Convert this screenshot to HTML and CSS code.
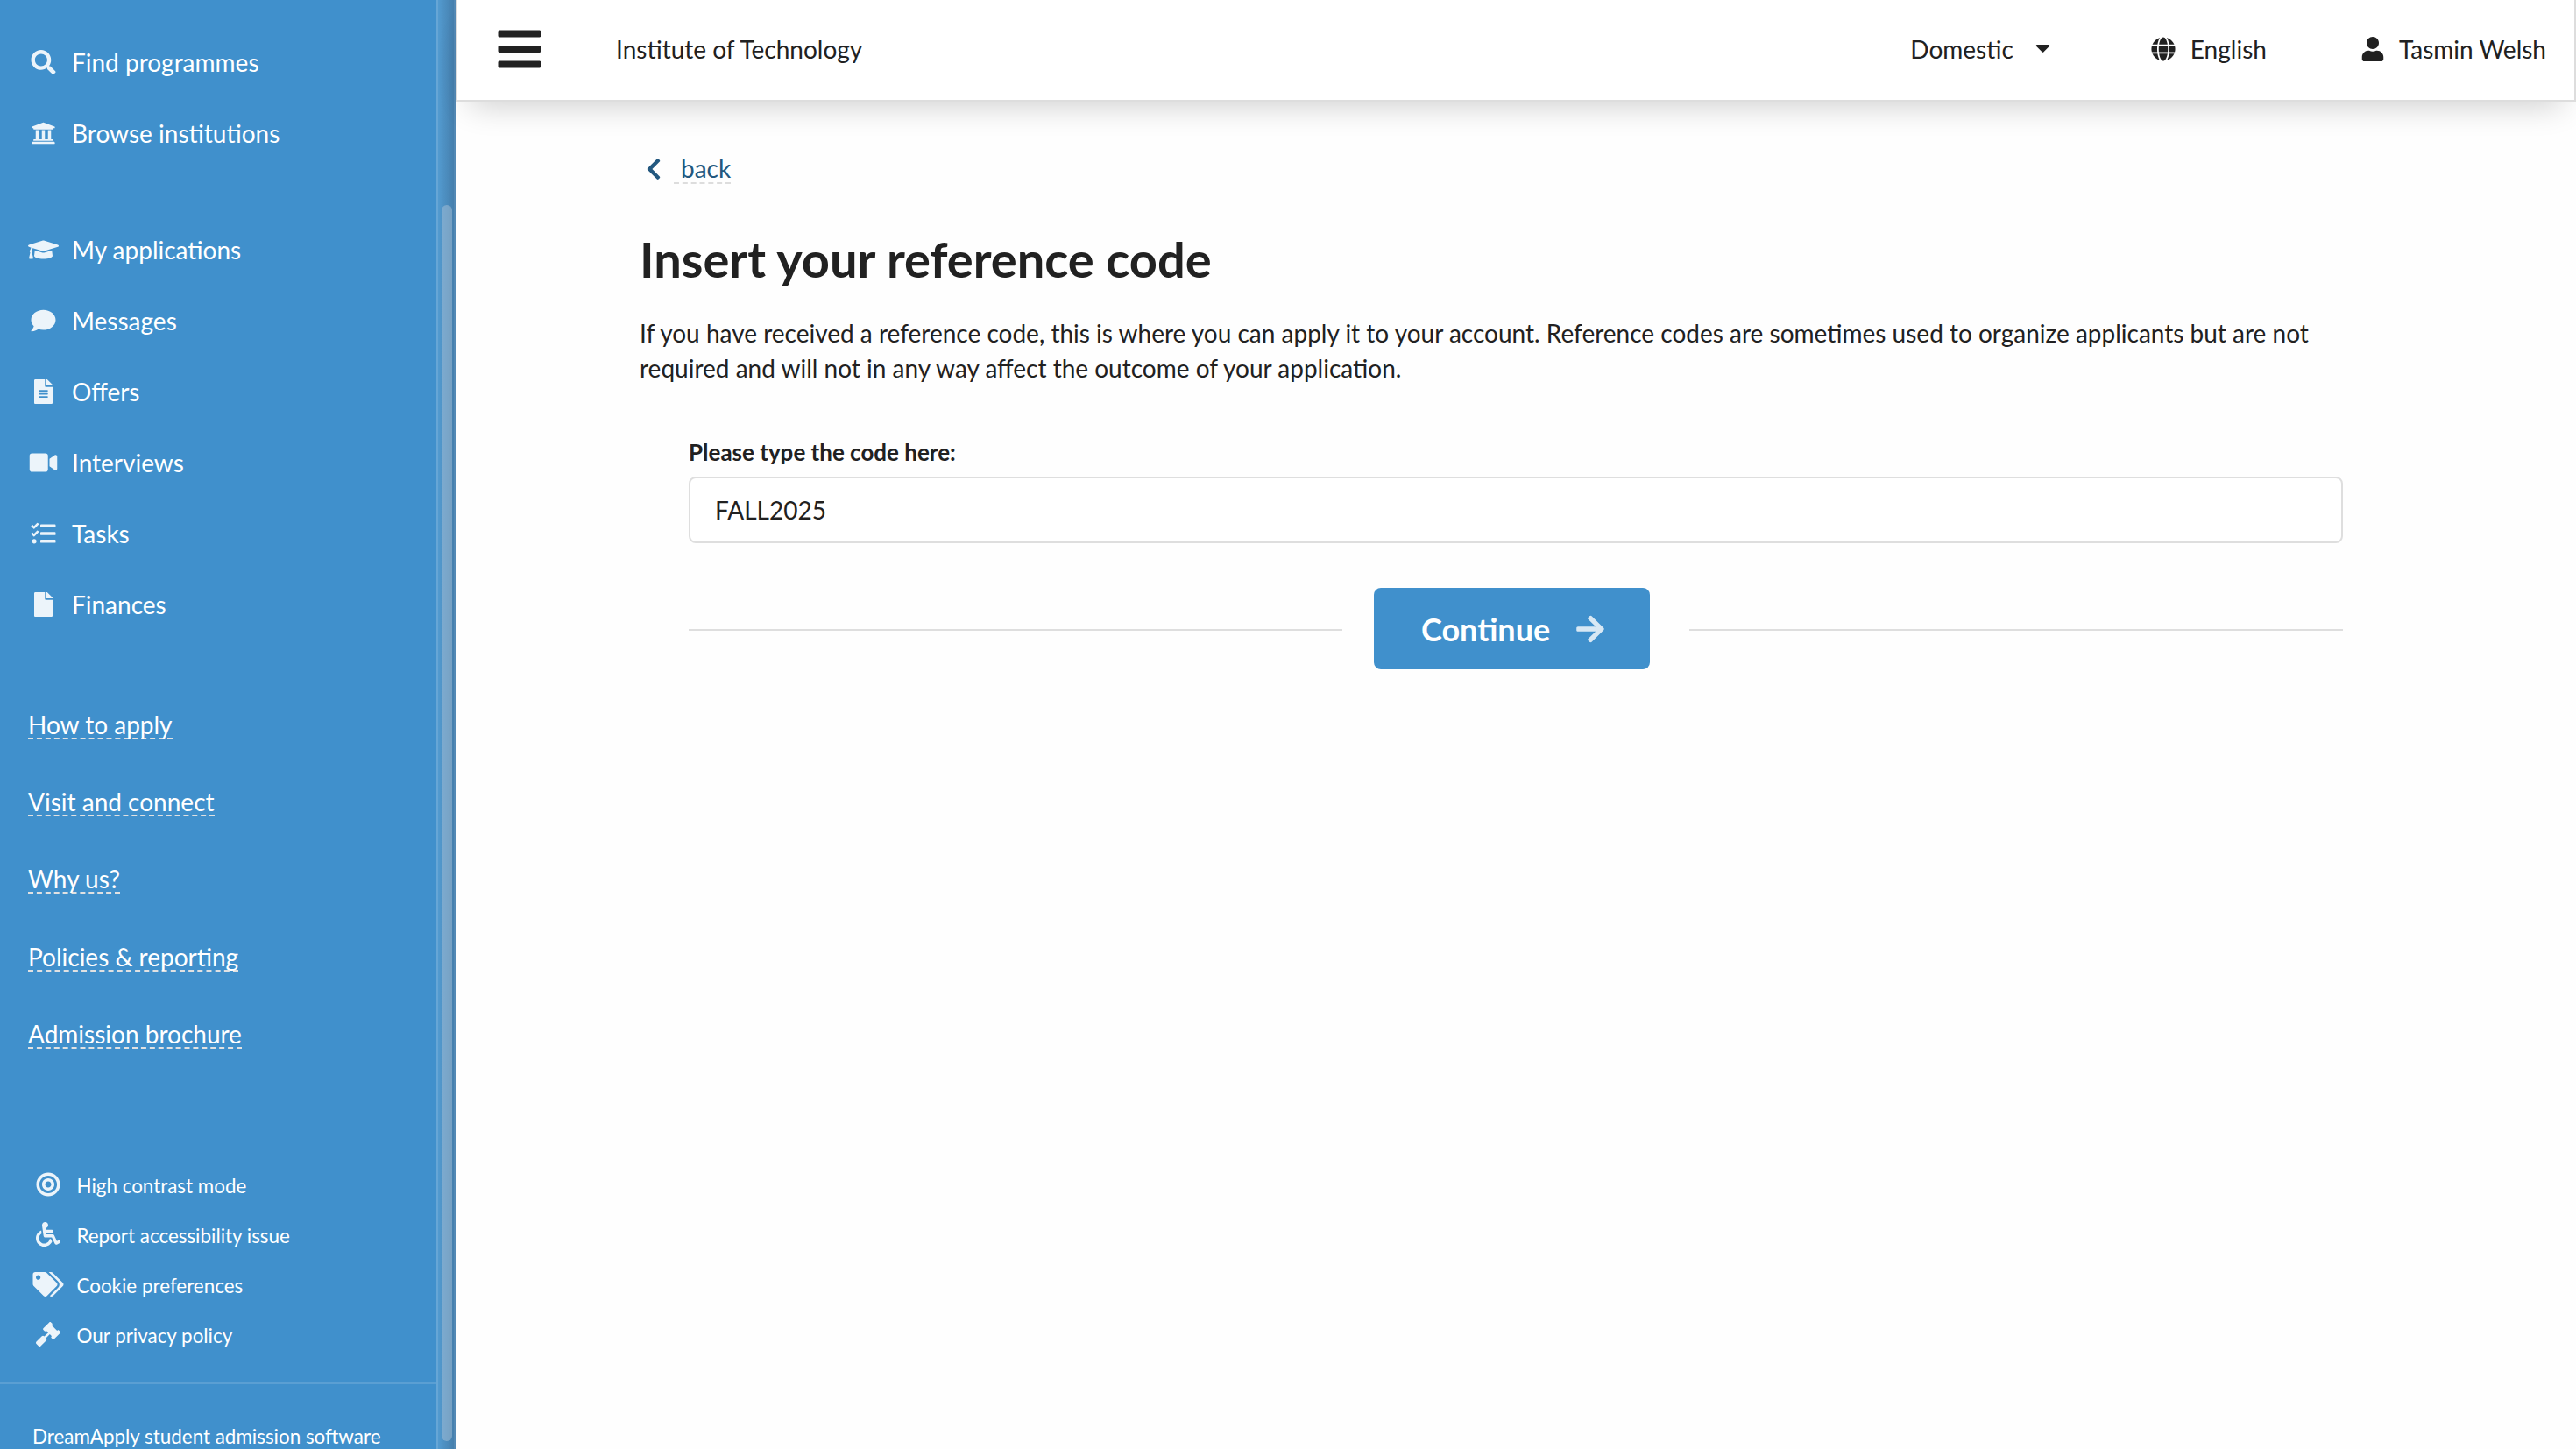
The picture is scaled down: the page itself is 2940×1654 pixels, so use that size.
FILE: index.html
```html
<!DOCTYPE html>
<html lang="en">
<head>
    <meta charset="UTF-8">
    <meta name="viewport" content="width=device-width, initial-scale=1.0">
    <title>Insert your reference code</title>
    <link rel="stylesheet" href="styles.css">
</head>
<body>
    <!-- SIDEBAR -->
    <aside class="sidebar">
        <div class="sidebar-content">
            <nav class="menu">
                <a class="menu-item" href="#">
                    <svg class="icon" viewBox="0 0 512 512"><path d="M505 442.7L405.3 343c-4.500-4.500-10.600-7-17-7H372c27.600-35.300 44-79.700 44-128C416 93.100 322.900 0 208 0S0 93.100 0 208s93.100 208 208 208c48.300 0 92.700-16.400 128-44v16.300c0 6.400 2.500 12.500 7 17l99.700 99.700c9.400 9.400 24.600 9.400 33.900 0l28.300-28.300c9.400-9.400 9.400-24.600.1-34zM208 336c-70.700 0-128-57.200-128-128 0-70.700 57.200-128 128-128 70.700 0 128 57.200 128 128 0 70.700-57.200 128-128 128z"/></svg>
                    <span>Find programmes</span>
                </a>
                <a class="menu-item" href="#">
                    <svg class="icon" viewBox="0 0 512 512"><path d="M496 128v16a8 8 0 0 1-8 8h-24v12c0 6.627-5.373 12-12 12H60c-6.627 0-12-5.373-12-12v-12H24a8 8 0 0 1-8-8v-16a8 8 0 0 1 4.941-7.392l232-88a7.996 7.996 0 0 1 6.118 0l232 88A8 8 0 0 1 496 128zm-24 304H40c-13.255 0-24 10.745-24 24v16a8 8 0 0 0 8 8h464a8 8 0 0 0 8-8v-16c0-13.255-10.745-24-24-24zM96 192v192H60c-6.627 0-12 5.373-12 12v20h416v-20c0-6.627-5.373-12-12-12h-36V192h-64v192h-64V192h-64v192h-64V192H96z"/></svg>
                    <span>Browse institutions</span>
                </a>
            </nav>

            <nav class="menu">
                <a class="menu-item" href="#">
                    <svg class="icon" viewBox="0 0 640 512"><path d="M622.340 153.200L343.400 67.500c-15.200-4.670-31.600-4.670-46.790 0L17.660 153.200c-23.540 7.230-23.540 38.360 0 45.590l48.630 14.940c-10.670 13.190-17.230 29.280-17.880 46.900C38.780 266.150 32 276.110 32 288c0 10.780 5.680 19.850 13.860 25.650L20.330 428.530C18.110 438.520 25.710 448 35.940 448h56.110c10.240 0 17.840-9.480 15.620-19.470L82.140 313.650C90.320 307.850 96 298.780 96 288c0-11.570-6.470-21.250-15.660-26.870.76-15.020 8.440-28.300 20.690-36.720L296.600 284.500c9.060 2.780 26.440 6.250 46.790 0l278.950-85.700c23.550-7.240 23.550-38.360 0-45.600zM352.790 315.090c-28.530 8.760-52.840 3.920-65.590 0l-145.020-44.550L128 384c0 35.350 85.960 64 192 64s192-28.650 192-64l-14.180-113.470-145.030 44.560z"/></svg>
                    <span>My applications</span>
                </a>
                <a class="menu-item" href="#">
                    <svg class="icon" viewBox="0 0 512 512"><path d="M256 32C114.600 32 0 125.100 0 240c0 49.600 21.400 95 57 130.700C44.500 421.100 2.700 466 2.200 466.500c-2.200 2.300-2.800 5.700-1.500 8.700S4.800 480 8 480c66.300 0 116-31.800 140.600-51.400 32.700 12.300 69 19.400 107.400 19.400 141.400 0 256-93.100 256-208S397.400 32 256 32z"/></svg>
                    <span>Messages</span>
                </a>
                <a class="menu-item" href="#">
                    <svg class="icon" viewBox="0 0 384 512"><path d="M224 136V0H24C10.700 0 0 10.700 0 24v464c0 13.300 10.700 24 24 24h336c13.300 0 24-10.700 24-24V160H248c-13.200 0-24-10.800-24-24zm64 236c0 6.600-5.400 12-12 12H108c-6.600 0-12-5.400-12-12v-8c0-6.600 5.400-12 12-12h168c6.600 0 12 5.400 12 12v8zm0-64c0 6.600-5.400 12-12 12H108c-6.600 0-12-5.400-12-12v-8c0-6.600 5.400-12 12-12h168c6.600 0 12 5.400 12 12v8zm0-72v8c0 6.600-5.400 12-12 12H108c-6.600 0-12-5.400-12-12v-8c0-6.600 5.400-12 12-12h168c6.600 0 12 5.400 12 12zm96-114.100v6.100H256V0h6.100c6.400 0 12.500 2.500 17 7l97.900 98c4.500 4.500 7 10.600 7 16.900z"/></svg>
                    <span>Offers</span>
                </a>
                <a class="menu-item" href="#">
                    <svg class="icon" viewBox="0 0 576 512"><path d="M336.200 64H47.800C21.400 64 0 85.400 0 111.800v288.400C0 426.600 21.400 448 47.800 448h288.400c26.400 0 47.800-21.400 47.800-47.800V111.800c0-26.400-21.400-47.800-47.800-47.800zm189.400 37.700L416 177.300v157.400l109.600 75.500c21.200 14.600 50.400-.3 50.400-25.800V127.500c0-25.400-29.100-40.400-50.400-25.800z"/></svg>
                    <span>Interviews</span>
                </a>
                <a class="menu-item" href="#">
                    <svg class="icon" viewBox="0 0 512 512"><path d="M139.610 35.500a12 12 0 0 0-17 0L58.930 98.810l-22.700-22.120a12 12 0 0 0-17 0L3.530 92.410a12 12 0 0 0 0 17l47.590 47.400a12.780 12.780 0 0 0 17.610 0l15.590-15.620L156.520 69a12.090 12.090 0 0 0 .09-17zm0 159.190a12 12 0 0 0-17 0l-63.680 63.720-22.700-22.100a12 12 0 0 0-17 0L3.530 252a12 12 0 0 0 0 17L51 316.500a12.770 12.770 0 0 0 17.600 0l15.700-15.690 72.200-72.220a12 12 0 0 0 .09-16.900zM64 368c-26.490 0-48.590 21.500-48.590 48S37.530 464 64 464a48 48 0 0 0 0-96zm432 16H208a16 16 0 0 0-16 16v32a16 16 0 0 0 16 16h288a16 16 0 0 0 16-16v-32a16 16 0 0 0-16-16zm0-320H208a16 16 0 0 0-16 16v32a16 16 0 0 0 16 16h288a16 16 0 0 0 16-16V80a16 16 0 0 0-16-16zm0 160H208a16 16 0 0 0-16 16v32a16 16 0 0 0 16 16h288a16 16 0 0 0 16-16v-32a16 16 0 0 0-16-16z"/></svg>
                    <span>Tasks</span>
                </a>
                <a class="menu-item" href="#">
                    <svg class="icon" viewBox="0 0 384 512"><path d="M224 136V0H24C10.700 0 0 10.700 0 24v464c0 13.300 10.700 24 24 24h336c13.300 0 24-10.700 24-24V160H248c-13.200 0-24-10.800-24-24zm160-14.100v6.100H256V0h6.100c6.400 0 12.500 2.500 17 7l97.900 98c4.500 4.500 7 10.600 7 16.900z"/></svg>
                    <span>Finances</span>
                </a>
            </nav>

            <nav class="links">
                <div class="link-row"><a href="#">How to apply</a></div>
                <div class="link-row"><a href="#">Visit and connect</a></div>
                <div class="link-row"><a href="#">Why us?</a></div>
                <div class="link-row"><a href="#">Policies &amp; reporting</a></div>
                <div class="link-row"><a href="#">Admission brochure</a></div>
            </nav>

            <nav class="small-menu">
                <a class="small-item" href="#">
                    <svg class="icon" viewBox="0 0 496 512"><path d="M248 8C111.030 8 0 119.030 0 256s111.030 248 248 248 248-111.030 248-248S384.970 8 248 8zm0 432c-101.690 0-184-82.290-184-184 0-101.690 82.290-184 184-184 101.690 0 184 82.290 184 184 0 101.690-82.290 184-184 184zm0-312c-70.690 0-128 57.310-128 128s57.310 128 128 128 128-57.310 128-128-57.310-128-128-128zm0 192c-35.290 0-64-28.710-64-64s28.710-64 64-64 64 28.710 64 64-28.710 64-64 64z"/></svg>
                    <span>High contrast mode</span>
                </a>
                <a class="small-item" href="#">
                    <svg class="icon" viewBox="0 0 512 512"><path d="M496.101 385.669l14.227 28.663c3.929 7.915.697 17.516-7.218 21.445l-65.465 32.886c-16.049 7.967-35.556 1.194-43.189-15.055L331.679 320H192c-15.925 0-29.426-11.710-31.679-27.475C126.433 55.308 128.380 70.044 128 64c0-36.358 30.318-65.635 67.052-63.929 33.271 1.545 60.048 28.905 60.925 62.201.868 32.933-23.152 60.423-54.608 65.039l4.670 32.690H336c8.837 0 16 7.163 16 16v32c0 8.837-7.163 16-16 16H215.182l4.572 32H352a32 32 0 0 1 28.962 18.392L438.477 396.800l36.178-18.349c7.915-3.929 17.517-.697 21.446 7.218zM311.358 352h-24.506c-7.788 54.204-54.528 96-110.852 96-61.757 0-112-50.243-112-112 0-41.505 22.694-77.809 56.324-97.156-3.712-25.965-6.844-47.860-9.488-66.333C45.956 198.464 0 261.963 0 336c0 97.047 78.953 176 176 176 71.870 0 133.806-43.308 161.110-105.192L311.358 352z"/></svg>
                    <span>Report accessibility issue</span>
                </a>
                <a class="small-item" href="#">
                    <svg class="icon" viewBox="0 0 640 512"><path d="M497.941 225.941L286.059 14.059A48 48 0 0 0 252.118 0H48C21.490 0 0 21.490 0 48v204.118a48 48 0 0 0 14.059 33.941l211.882 211.882c18.744 18.745 49.136 18.746 67.882 0l204.118-204.118c18.745-18.745 18.745-49.137 0-67.882zM112 160c-26.510 0-48-21.490-48-48s21.490-48 48-48 48 21.490 48 48-21.490 48-48 48zm513.941 133.823L421.823 497.941c-18.745 18.745-49.137 18.745-67.882 0l-.360-.360L527.640 323.522c16.999-16.999 26.360-39.600 26.360-63.640s-9.362-46.641-26.360-63.640L331.397 0h48.721a48 48 0 0 1 33.941 14.059l211.882 211.882c18.745 18.745 18.745 49.137 0 67.882z"/></svg>
                    <span>Cookie preferences</span>
                </a>
                <a class="small-item" href="#">
                    <svg class="icon" viewBox="0 0 512 512"><path d="M504.971 199.362l-22.627-22.627c-9.373-9.373-24.569-9.373-33.941 0l-5.657 5.657L329.608 69.255l5.657-5.657c9.373-9.373 9.373-24.569 0-33.941L312.638 7.029c-9.373-9.373-24.569-9.373-33.941 0L154.246 131.480c-9.373 9.373-9.373 24.569 0 33.941l22.627 22.627c9.373 9.373 24.569 9.373 33.941 0l5.657-5.657 39.598 39.598-81.040 81.040-5.657-5.657c-12.497-12.497-32.758-12.497-45.255 0L9.373 412.118c-12.497 12.497-12.497 32.758 0 45.255l45.255 45.255c12.497 12.497 32.758 12.497 45.255 0l114.745-114.745c12.497-12.497 12.497-32.758 0-45.255l-5.657-5.657 81.040-81.040 39.598 39.598-5.657 5.657c-9.373 9.373-9.373 24.569 0 33.941l22.627 22.627c9.373 9.373 24.569 9.373 33.941 0l124.451-124.451c9.372-9.372 9.372-24.568 0-33.941z"/></svg>
                    <span>Our privacy policy</span>
                </a>
            </nav>

            <footer class="sidebar-footer">DreamApply student admission software</footer>
        </div>
        <div class="scroll-track">
            <div class="scroll-thumb"></div>
        </div>
    </aside>

    <!-- PAGE -->
    <div class="page">
        <header class="topbar">
            <svg class="burger" viewBox="0 0 448 512"><path d="M16 132h416c8.837 0 16-7.163 16-16V76c0-8.837-7.163-16-16-16H16C7.163 60 0 67.163 0 76v40c0 8.837 7.163 16 16 16zm0 160h416c8.837 0 16-7.163 16-16v-40c0-8.837-7.163-16-16-16H16c-8.837 0-16 7.163-16 16v40c0 8.837 7.163 16 16 16zm0 160h416c8.837 0 16-7.163 16-16v-40c0-8.837-7.163-16-16-16H16c-8.837 0-16 7.163-16 16v40c0 8.837 7.163 16 16 16z"/></svg>
            <span class="institution">Institute of Technology</span>
            <div class="topbar-right">
                <span class="dropdown">Domestic <svg class="caret" viewBox="0 0 320 192"><path d="M31.300 0h257.300c17.800 0 26.700 21.500 14.100 34.100L174.100 162.800c-7.800 7.800-20.500 7.800-28.300 0L17.200 34.100C4.600 21.500 13.500 0 31.300 0z"/></svg></span>
                <span class="language"><svg class="icon" viewBox="0 0 496 512"><path d="M336.500 160C322 70.700 287.800 8 248 8s-74 62.700-88.500 152h177zM152 256c0 22.200 1.200 43.500 3.300 64h185.300c2.100-20.500 3.300-41.800 3.300-64s-1.200-43.500-3.300-64H155.300c-2.100 20.500-3.300 41.800-3.300 64zm324.700-96c-28.600-67.900-86.500-120.400-158-141.600 24.400 33.800 41.200 84.700 50 141.600h108zM177.200 18.400C105.800 39.600 47.800 92.100 19.300 160h108c8.700-56.900 25.500-107.800 49.900-141.600zM487.400 192H372.700c2.100 21 3.300 42.500 3.300 64s-1.200 43-3.300 64h114.600c5.500-20.500 8.600-41.800 8.600-64s-3.100-43.500-8.500-64zM120 256c0-21.500 1.200-43 3.300-64H8.600C3.200 212.500 0 233.800 0 256s3.200 43.500 8.600 64h114.600c-2-21-3.200-42.500-3.200-64zm39.500 96c14.500 89.300 48.700 152 88.500 152s74-62.700 88.500-152h-177zm159.300 141.600c71.400-21.200 129.400-73.700 158-141.600h-108c-8.800 56.900-25.600 107.800-50 141.600zM19.300 352c28.600 67.900 86.500 120.400 158 141.600-24.400-33.800-41.200-84.700-50-141.600h-108z"/></svg>English</span>
                <span class="user"><svg class="icon" viewBox="0 0 448 512"><path d="M224 256c70.700 0 128-57.300 128-128S294.700 0 224 0 96 57.300 96 128s57.300 128 128 128zm89.600 32h-16.700c-22.200 10.200-46.900 16-72.900 16s-50.600-5.800-72.900-16h-16.700C60.200 288 0 348.200 0 422.400V464c0 26.500 21.500 48 48 48h352c26.500 0 48-21.500 48-48v-41.600c0-74.200-60.200-134.400-134.400-134.400z"/></svg>Tasmin Welsh</span>
            </div>
        </header>

        <main class="container">
            <a class="back" href="#">
                <svg class="chevron" viewBox="0 0 320 512"><path d="M34.520 239.030L228.870 44.690c9.370-9.370 24.570-9.370 33.940 0l22.670 22.670c9.360 9.360 9.370 24.520.04 33.900L131.490 256l154.020 154.750c9.340 9.380 9.320 24.540-.04 33.900l-22.670 22.670c-9.370 9.370-24.570 9.370-33.940 0L34.520 272.970c-9.370-9.370-9.370-24.570 0-33.940z"/></svg>
                <span>back</span>
            </a>
            <h1>Insert your reference code</h1>
            <p class="intro">If you have received a reference code, this is where you can apply it to your account. Reference codes are sometimes used to organize applicants but are not required and will not in any way affect the outcome of your application.</p>

            <form class="code-form">
                <label for="code">Please type the code here:</label>
                <input type="text" id="code" value="FALL2025">
                <div class="actions">
                    <button type="button" class="continue-button">Continue <svg class="arrow" viewBox="0 0 448 512"><path d="M190.500 66.900l22.200-22.200c9.400-9.400 24.600-9.400 33.900 0L441 239c9.400 9.400 9.400 24.600 0 33.900L246.600 467.300c-9.400 9.400-24.600 9.400-33.900 0l-22.200-22.200c-9.500-9.500-9.300-25 .4-34.300L311.400 296H24c-13.300 0-24-10.700-24-24v-32c0-13.300 10.700-24 24-24h287.400L190.900 101.200c-9.800-9.300-10-24.800-.4-34.300z"/></svg></button>
                </div>
            </form>
        </main>
    </div>
</body>
</html>
```

FILE: styles.css
```css
/* General Styles */
* {
    box-sizing: border-box;
}

body {
    margin: 0;
    height: 100vh;
    display: flex;
    overflow: hidden;
    font-family: Lato, 'Helvetica Neue', Arial, sans-serif;
    font-size: 28px;
    line-height: 40px;
    color: #212121;
    background: #fefefe;
}

a {
    color: inherit;
    text-decoration: none;
}

svg {
    display: block;
    fill: currentColor;
    flex-shrink: 0;
}

/* Sidebar */
.sidebar {
    display: flex;
    width: 520px;
    height: 100vh;
    flex-shrink: 0;
    overflow: hidden;
    background: #4090cc;
    color: #fff;
}

.sidebar-content {
    width: 498px;
    padding-top: 30px;
}

.menu {
    margin-bottom: 52px;
}

.menu-item {
    display: flex;
    align-items: center;
    height: 81px;
    padding-left: 31.5px;
}

.menu-item .icon {
    width: 35px;
    height: 28px;
    margin-right: 15.5px;
    opacity: 0.9;
}

.links {
    padding-top: 1.5px;
    margin-bottom: 98.5px;
}

.link-row {
    display: flex;
    align-items: center;
    height: 88.4px;
    padding-left: 32px;
}

.link-row a {
    line-height: 30px;
    border-bottom: 2px dashed #e0e1e2;
}

/* Small links at the bottom */
.small-menu {
    padding-bottom: 26px;
    border-bottom: 2px solid #5a9fd3;
    font-size: 22.4px;
}

.small-item {
    display: flex;
    align-items: center;
    height: 57px;
    padding-left: 36.5px;
}

.small-item .icon {
    width: 36px;
    height: 28px;
    margin-right: 15px;
    opacity: 0.9;
}

.small-item span {
    padding-top: 3px;
}

.sidebar-footer {
    padding: 40px 0 0 37px;
    font-size: 22.4px;
    white-space: nowrap;
}

/* Scrollbar */
.scroll-track {
    width: 22px;
    padding: 234px 2px 9px 4px;
    border-left: 2px solid #66a6d6;
    border-right: 2px solid #5389b5;
    background: linear-gradient(90deg, #539bd0, #457fad);
}

.scroll-thumb {
    width: 12px;
    height: 100%;
    border-radius: 6px;
    background: linear-gradient(90deg, #7dabd0, #76a1c3);
}

/* Top bar */
.page {
    flex: 1;
}

.topbar {
    display: flex;
    align-items: center;
    height: 116px;
    padding: 0 32px 2px 46px;
    border: 2px solid #ddd;
    border-top: none;
    background: #fff;
    box-shadow: 0 20px 36px -16px rgba(0, 0, 0, 0.2);
}

.burger {
    width: 50px;
    height: 56px;
}

.institution {
    margin-left: 85px;
}

.topbar-right {
    display: flex;
    margin-left: auto;
}

.topbar-right > span {
    display: flex;
    align-items: center;
}

.caret {
    width: 17px;
    height: 10px;
    margin-left: 25px;
}

.language {
    margin-left: 115px;
}

.user {
    margin-left: 107px;
}

.topbar .icon {
    width: 28px;
    height: 28px;
    margin-right: 17px;
}

.topbar .user .icon {
    margin-right: 16px;
}

/* Content */
.container {
    width: 1944px;
    margin-left: 210px;
    padding-top: 56px;
}

.back {
    display: flex;
    align-items: center;
    height: 42px;
    color: #23587f;
}

.chevron {
    width: 18px;
    height: 28px;
    margin: 0 14px 0 7px;
}

.back span {
    padding-left: 8px;
    line-height: 32px;
    border-bottom: 2px dashed #ddd;
}

h1 {
    margin: 46px 0 28px;
    font-size: 56px;
    line-height: 72px;
}

.intro {
    margin: 0;
}

/* Code form */
.code-form {
    width: 1888px;
    margin: 58px 0 0 56px;
}

label {
    display: block;
    font-size: 26px;
    line-height: 37px;
    font-weight: bold;
}

input {
    display: block;
    width: 100%;
    height: 76px;
    margin-top: 9px;
    padding: 0 28px;
    border: 2px solid #dedede;
    border-radius: 8px;
    background: #fff;
    color: #212121;
    font: inherit;
    outline: none;
}

.actions {
    display: flex;
    align-items: center;
    margin-top: 51px;
}

.actions::before,
.actions::after {
    content: "";
    flex: 1;
    height: 2px;
    margin-top: 2px;
    background: #dedede;
}

.continue-button {
    display: flex;
    align-items: center;
    height: 93px;
    width: 315px;
    margin: 0 45px 0 36px;
    padding: 0 0 0 54px;
    border: none;
    border-radius: 8px;
    background: #4090cc;
    color: #fff;
    font-family: inherit;
    font-size: 36px;
    font-weight: bold;
    cursor: pointer;
}

.arrow {
    width: 32px;
    height: 36px;
    margin-left: 30px;
    opacity: 0.8;
}
```
